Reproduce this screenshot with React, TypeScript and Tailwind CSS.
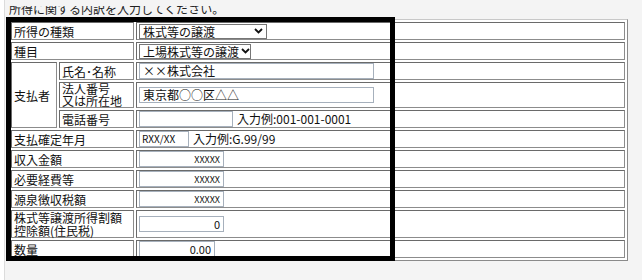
import React from "react";

const font = { fontFamily: '"Noto Sans CJK JP", "Noto Sans", sans-serif' };

function Chevron() {
  return (
    <svg width="9" height="6" viewBox="0 0 9 6" className="shrink-0 ml-[2px]">
      <path d="M1 1 L4.5 4.5 L8 1" fill="none" stroke="#111" strokeWidth="1.8" />
    </svg>
  );
}

function Select({ value, width }: { value: string; width: string }) {
  return (
    <div
      className={`flex items-center justify-between h-[15px] whitespace-nowrap border border-[#767676] bg-white pl-[3px] pr-[3px] text-[12px] leading-[13px] text-[#111] ${width}`}
    >
      <span>{value}</span>
      <Chevron />
    </div>
  );
}

function TextBox({
  value,
  width,
  right,
  small,
}: {
  value: string;
  width: string;
  right?: boolean;
  small?: boolean;
}) {
  return (
    <div
      className={`h-[16px] border border-[#a6b0bc] bg-white px-[3px] text-[#111] whitespace-nowrap ${width} ${
        right ? "text-right" : ""
      } ${small ? "text-[9px] leading-[15px]" : "text-[12px] leading-[14px]"}`}
    >
      {value}
    </div>
  );
}

const cell = "border border-[#8c8c8c] border-t-[#6a6a6a] border-l-[#6a6a6a] px-[2px] py-0 align-middle";
const label = `${cell} text-[12px] text-[#111]`;

export default function App() {
  return (
    <div className="w-[642px] h-[280px] bg-white overflow-hidden" style={font}>
      <div className="relative ml-[4px] h-full bg-[#f4f4f4] border-l border-[#dcdcdc] pt-[6px]">
        <div className="ml-[4px] h-[10px] overflow-hidden">
          <p className="-mt-[6px] text-[12px] leading-[18px] text-[#222] whitespace-nowrap">
            所得に関する内訳を入力してください。
          </p>
        </div>
        <table className="ml-[3px] mt-[3px] w-[620px] table-fixed border-separate border-spacing-[2px] bg-white border border-[#c8c8c8] border-r-[#8a8a8a] border-b-[#8a8a8a]">
          <colgroup>
            <col className="w-[46px]" />
            <col className="w-[75px]" />
            <col />
          </colgroup>
          <tbody>
            <tr>
              <td colSpan={2} className={`${label} h-[18px] leading-[13px]`}>所得の種類</td>
              <td className={cell}>
                <Select value="株式等の譲渡" width="w-[128px]" />
              </td>
            </tr>
            <tr>
              <td colSpan={2} className={`${label} h-[18px] leading-[13px]`}>種目</td>
              <td className={cell}>
                <Select value="上場株式等の譲渡" width="w-[112px]" />
              </td>
            </tr>
            <tr>
              <td rowSpan={3} className={`${label} leading-[13px]`}>支払者</td>
              <td className={`${label} h-[18px] leading-[13px]`}>氏名･名称</td>
              <td className={cell}>
                <TextBox value="××株式会社" width="w-[235px]" />
              </td>
            </tr>
            <tr>
              <td className={`${label} h-[26px] leading-[12px]`}>
                法人番号
                <br />
                又は所在地
              </td>
              <td className={cell}>
                <TextBox value="東京都○○区△△" width="w-[235px]" />
              </td>
            </tr>
            <tr>
              <td className={`${label} h-[18px] leading-[13px]`}>電話番号</td>
              <td className={cell}>
                <div className="flex items-center gap-[4px] text-[12px] leading-[14px] text-[#111]">
                  <TextBox value="" width="w-[94px]" />
                  <span>入力例:001-001-0001</span>
                </div>
              </td>
            </tr>
            <tr>
              <td colSpan={2} className={`${label} h-[18px] leading-[13px]`}>支払確定年月</td>
              <td className={cell}>
                <div className="flex items-center gap-[4px] text-[12px] leading-[14px] text-[#111]">
                  <div className="h-[16px] w-[50px] border border-[#a6b0bc] bg-white px-[2px] text-[10px] leading-[14px]">
                    RXX/XX
                  </div>
                  <span>入力例:G.99/99</span>
                </div>
              </td>
            </tr>
            <tr>
              <td colSpan={2} className={`${label} h-[18px] leading-[13px]`}>収入金額</td>
              <td className={cell}>
                <TextBox value="XXXXX" width="w-[85px]" right small />
              </td>
            </tr>
            <tr>
              <td colSpan={2} className={`${label} h-[18px] leading-[13px]`}>必要経費等</td>
              <td className={cell}>
                <TextBox value="XXXXX" width="w-[85px]" right small />
              </td>
            </tr>
            <tr>
              <td colSpan={2} className={`${label} h-[18px] leading-[13px]`}>源泉徴収税額</td>
              <td className={cell}>
                <TextBox value="XXXXX" width="w-[85px]" right small />
              </td>
            </tr>
            <tr>
              <td colSpan={2} className={`${label} h-[28px] leading-[13px]`}>
                株式等譲渡所得割額
                <br />
                控除額(住民税)
              </td>
              <td className={cell}>
                <div className="h-[16px] w-[85px] border border-[#a6b0bc] bg-white px-[3px] text-right text-[11px] leading-[14px] text-[#111]">
                  0
                </div>
              </td>
            </tr>
            <tr>
              <td colSpan={2} className={`${label} h-[18px] leading-[13px]`}>数量</td>
              <td className={cell}>
                <div className="h-[16px] w-[76px] border border-[#a6b0bc] bg-white px-[3px] text-right text-[11px] leading-[14px] text-[#111]">
                  0.00
                </div>
              </td>
            </tr>
          </tbody>
        </table>
        <div className="absolute left-[1px] top-[17px] w-[389px] h-[244px] border-[5px] border-black pointer-events-none" />
      </div>
    </div>
  );
}
